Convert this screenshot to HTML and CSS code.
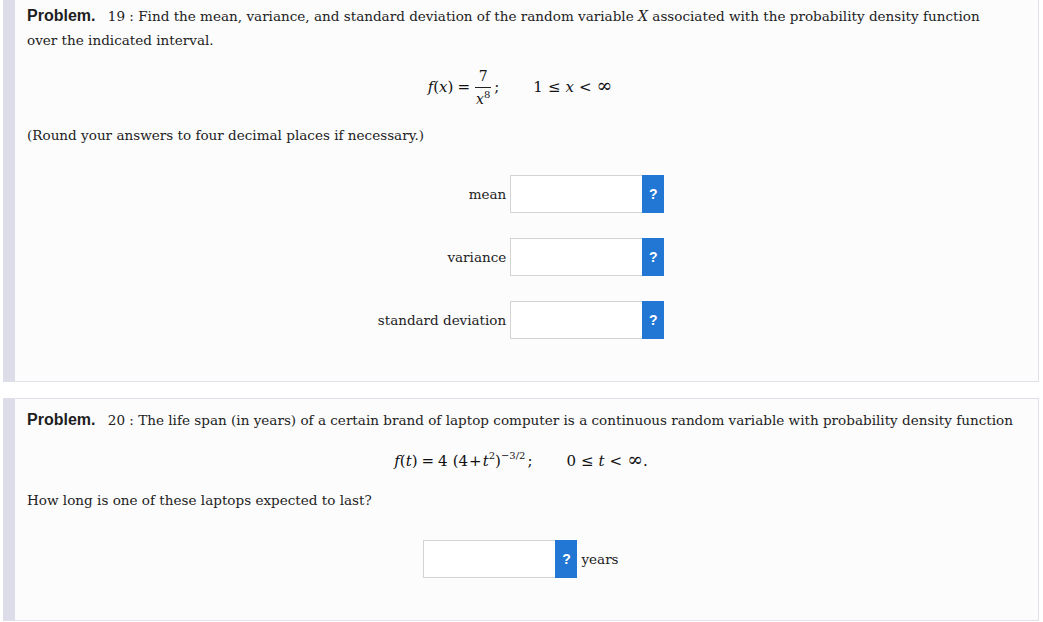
FILE: index.html
```html
<!DOCTYPE html>
<html>
<head>
<meta charset="utf-8">
<link rel="stylesheet" href="styles.css">
</head>
<body>
<div class="card card-first">
  <p class="line"><span class="prob">Problem.</span> <span class="num">19 :</span> Find the mean, variance, and standard deviation of the random variable <i class="mv">X</i> associated with the probability density function<br>over the indicated interval.</p>
  <div class="formula f1"><span class="mrow"><span class="mi">f</span>(<span class="mi">x</span>)<span class="eq">=</span><span class="frac"><span class="numr">7</span><span class="den"><span class="mi">x</span><sup class="sup">8</sup></span></span>;<span class="spacer"></span>1<span class="rel">≤</span><span class="mi">x</span><span class="rel">&lt;</span><span class="inf">∞</span></span></div>
  <p class="line round">(Round your answers to four decimal places if necessary.)</p>
  <div class="answers">
    <label class="lbl">mean</label>
    <div class="ans"><span class="box"></span><span class="help">?</span></div>
    <label class="lbl">variance</label>
    <div class="ans"><span class="box"></span><span class="help">?</span></div>
    <label class="lbl">standard deviation</label>
    <div class="ans"><span class="box"></span><span class="help">?</span></div>
  </div>
</div>
<div class="card card-second">
  <p class="line nowrap"><span class="prob">Problem.</span> <span class="num">20 :</span> The life span (in years) of a certain brand of laptop computer is a continuous random variable with probability density function</p>
  <div class="formula f2"><span class="mrow"><span class="mi">f</span>(<span class="mi">t</span>)<span class="eq">=</span>4<span class="pl">(</span>4<span class="plus">+</span><span class="mi">t</span><sup class="sup">2</sup>)<sup class="sup exp">−3/2</sup>;<span class="spacer"></span>0<span class="rel">≤</span><span class="mi">t</span><span class="rel">&lt;</span><span class="inf">∞</span>.</span></div>
  <p class="line how">How long is one of these laptops expected to last?</p>
  <div class="single">
    <div class="ans"><span class="box"></span><span class="help">?</span></div>
    <span class="unit">years</span>
  </div>
</div>
</body>
</html>
```

FILE: styles.css
```css
html, body {
  margin: 0;
  padding: 0;
  background: #ffffff;
}
body {
  padding: 0 4px 0 3px;
  font-family: "DejaVu Serif", "Liberation Serif", serif;
  font-size: 13.55px;
  color: #222;
}
.card {
  background: #fcfcfd;
  border: 1px solid #e1e1ea;
  border-left: 12px solid #dddde9;
  padding-left: 12px;
  padding-right: 23px;
}
.card-first {
  border-top: none;
  padding-top: 4px;
  padding-bottom: 42px;
}
.card-second {
  margin-top: 16px;
  padding-top: 9px;
  padding-bottom: 42px;
}
.line {
  margin: 0;
  line-height: 24px;
}
.nowrap { white-space: nowrap; }
.prob {
  font-family: "Liberation Sans", Arial, sans-serif;
  font-weight: bold;
  font-size: 16px;
  color: #1e1e1e;
  margin-right: 8px;
}
.mv {
  font-family: "DejaVu Serif", serif;
  font-size: 14px;
}
.formula {
  text-align: center;
  font-family: "DejaVu Serif", serif;
  font-size: 15px;
  color: #111;
  white-space: nowrap;
}
.f1 {
  margin-top: 15px;
  height: 40px;
  line-height: 40px;
  padding-right: 2px;
}
.f2 {
  margin-top: 17px;
  height: 24px;
  line-height: 24px;
}
.mi { font-style: italic; }
.eq { margin: 0 4px; }
.rel { margin: 0 5px; }
.plus { margin: 0 1px; }
.pl { margin-left: 5px; }
.inf { font-size: 19px; line-height: 0; }
.spacer {
  display: inline-block;
  width: 34px;
}
.frac {
  display: inline-block;
  vertical-align: middle;
  text-align: center;
  line-height: normal;
  margin: 0 3px 0 1px;
}
.numr {
  display: block;
  font-size: 14px;
  line-height: 19px;
  padding: 0 3px 1px;
  border-bottom: 1px solid #222;
}
.den {
  display: block;
  font-size: 14px;
  line-height: 20px;
  padding: 1px 1px 0;
}
.sup {
  font-size: 10px;
  font-style: normal;
  vertical-align: 7px;
  line-height: 0;
}
.den .sup { vertical-align: 6px; }
.exp { margin-right: 2px; font-size: 10px; }
.round { margin-top: 16px; }
.answers {
  display: grid;
  grid-template-columns: auto auto;
  justify-content: center;
  align-items: center;
  column-gap: 4px;
  row-gap: 25px;
  margin-top: 28px;
}
.lbl {
  text-align: right;
  font-size: 13.5px;
}
.ans {
  display: flex;
  height: 38px;
}
.box {
  width: 131px;
  height: 36px;
  background: #fff;
  border: 1px solid #d4d4d4;
  border-right: none;
}
.help {
  width: 22px;
  height: 38px;
  background: #2277d5;
  color: #fff;
  font-family: "Liberation Sans", Arial, sans-serif;
  font-weight: bold;
  font-size: 14px;
  display: flex;
  align-items: center;
  justify-content: center;
}
.how { margin-top: 15px; }
.single {
  display: flex;
  justify-content: center;
  align-items: center;
  gap: 4px;
  margin-top: 28px;
}
.unit { font-size: 13.5px; }
```
